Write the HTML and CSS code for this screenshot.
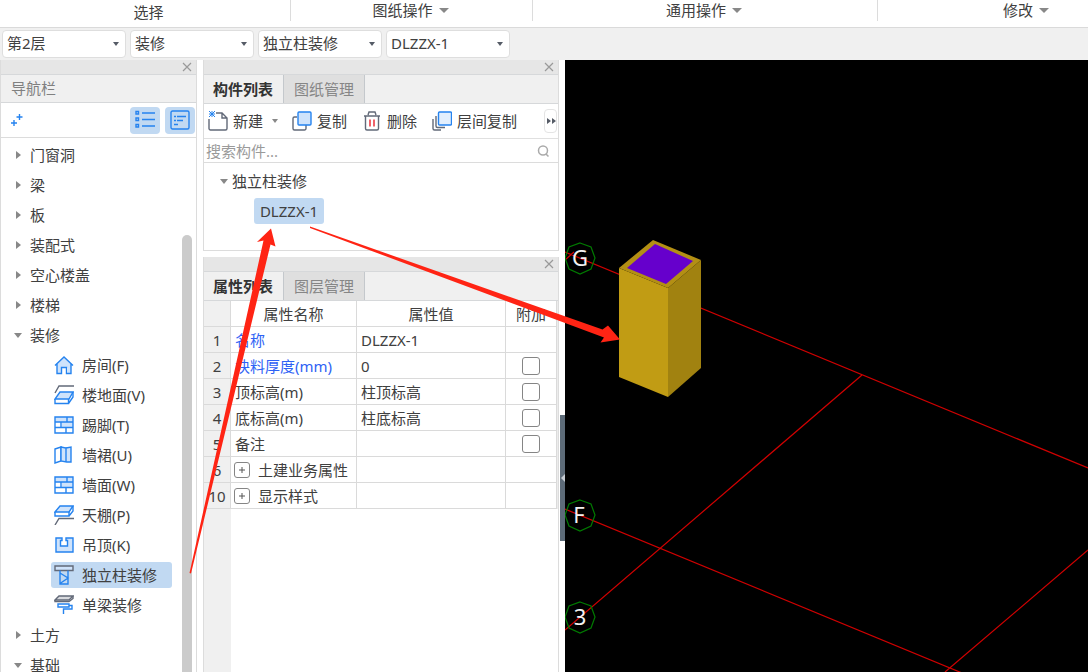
FILE: index.html
```html
<!DOCTYPE html>
<html lang="zh-CN">
<head>
<meta charset="utf-8">
<meta name="viewport" content="width=device-width, initial-scale=1">
<title>构件装修</title>
<link rel="stylesheet" href="styles.css">
</head>
<body>
<div class="app">
  <header class="ribbon">
    <div class="ribbon-group group-select"><span>选择</span></div>
    <div class="ribbon-group group-drawing"><button class="ribbon-button">图纸操作<i class="caret"></i></button></div>
    <div class="ribbon-group group-common"><button class="ribbon-button">通用操作<i class="caret"></i></button></div>
    <div class="ribbon-group group-modify"><button class="ribbon-button">修改<i class="caret"></i></button></div>
  </header>

  <div class="selectors">
    <div class="combo"><select aria-label="楼层"><option>第2层</option></select></div>
    <div class="combo"><select aria-label="分类"><option>装修</option></select></div>
    <div class="combo"><select aria-label="构件类型"><option>独立柱装修</option></select></div>
    <div class="combo"><select aria-label="构件"><option>DLZZX-1</option></select></div>
  </div>

  <main class="workspace">
    <nav class="navigator" aria-label="导航栏">
      <div class="strip"><button class="close" aria-label="关闭"><svg width="10" height="10" viewBox="0 0 10 10"><path d="M1 1l8 8M9 1l-8 8"/></svg></button></div>
      <h2 class="nav-title">导航栏</h2>
      <div class="nav-tools">
        <button class="plain" aria-label="添加"><svg class="icon" width="14" height="14" viewBox="0 0 14 14"><path class="blue" d="M9.500 1v6M6.500 4h6M4 7v6M1 10h6"/></svg></button>
        <button class="view" aria-label="列表视图"><svg class="icon" width="20" height="20" viewBox="0 0 20 20"><path class="blue" d="M1 1.500h2.500v2.500H1zM1 8h2.500v2.500H1zM1 14.500h2.500V17H1zM7 3h13M7 9.500h13M7 16h13"/></svg></button>
        <button class="view" aria-label="详细视图"><svg class="icon" width="20" height="20" viewBox="0 0 20 20"><rect class="blue" x="1" y="1" width="18" height="18" rx="1.500"/><path class="blue" d="M4 6.500h2M7 6.500h9M4 10.500h2M7 10.500h6M4 14.500h4"/></svg></button>
      </div>
      <div class="nav-body">
        <ul class="nav-tree">
          <li><button class="branch"><i class="arrow"></i>门窗洞</button></li>
          <li><button class="branch"><i class="arrow"></i>梁</button></li>
          <li><button class="branch"><i class="arrow"></i>板</button></li>
          <li><button class="branch"><i class="arrow"></i>装配式</button></li>
          <li><button class="branch"><i class="arrow"></i>空心楼盖</button></li>
          <li><button class="branch"><i class="arrow"></i>楼梯</button></li>
          <li><button class="branch"><i class="arrow open"></i>装修</button>
            <ul class="leaves">
              <li><button class="leaf"><svg class="icon" width="20" height="20" viewBox="0 0 20 20"><path class="fill" d="M10 2l7 7v9.500h-3v-6H7v6H3V9z"/><path class="blue" d="M1 10.500l9-8.500 9 8.500M3 9v9.500h4.500v-6h5v6H17V9"/></svg>房间(F)</button></li>
              <li><button class="leaf"><svg class="icon" width="20" height="20" viewBox="0 0 20 20"><path class="slate" d="M1 8l4-7h15"/><path class="blue fill" d="M6 7h13l-4 7H1z"/><path class="blue" d="M1 14v4.500h13.500V14M14.500 18.500L19 12V7"/></svg>楼地面(V)</button></li>
              <li><button class="leaf"><svg class="icon" width="20" height="20" viewBox="0 0 20 20"><path class="fill" d="M1 2h18v5H1zM8 7h11v5H8z"/><path class="blue" d="M1 2h18v16H1zM1 7h18M1 12.500h18M13 2v5M7 7v5.500M12 12.500V18"/></svg>踢脚(T)</button></li>
              <li><button class="leaf"><svg class="icon" width="20" height="20" viewBox="0 0 20 20"><path class="blue" d="M1 4l6-2v14l-6 2z"/><path class="blue fill" d="M7 2l5 1v14l-5-1zM12 3l5-1v15h-5z"/></svg>墙裙(U)</button></li>
              <li><button class="leaf"><svg class="icon" width="20" height="20" viewBox="0 0 20 20"><path class="fill" d="M1 2h18v5H1zM8 7h11v5H8z"/><path class="blue" d="M1 2h18v16H1zM1 7h18M1 12.500h18M13 2v5M7 7v5.500M12 12.500V18"/></svg>墙面(W)</button></li>
              <li><button class="leaf"><svg class="icon" width="20" height="20" viewBox="0 0 20 20"><path class="blue fill" d="M6 1h13l-4 6H1z"/><path class="blue" d="M1 7v4h14V7M15 11l4-5V1"/><path class="slate" d="M1 20l4-6.500h15"/></svg>天棚(P)</button></li>
              <li><button class="leaf"><svg class="icon" width="20" height="20" viewBox="0 0 20 20"><path class="blue fill" d="M2 3h6v2.500H6.500V11h7V5.500H12V3h7v14H2z"/></svg>吊顶(K)</button></li>
              <li><button class="leaf selected"><svg class="icon" width="20" height="20" viewBox="0 0 20 20"><path class="slate fill" d="M1 1h18v4.500H1z"/><path class="blue" d="M6 5.500V19h8V5.500M6 8l8 5-8 5.500M14 8v11"/></svg>独立柱装修</button></li>
              <li><button class="leaf"><svg class="icon" width="20" height="20" viewBox="0 0 20 20"><path class="slate grayfill" d="M5 1h14l-4 4H1z"/><path class="slate" d="M1 5v1.500h14l4-3V1"/><path class="blue" d="M4 9h11v3H4zM15 10.500h3v3.500H9.500v5"/></svg>单梁装修</button></li>
            </ul>
          </li>
          <li><button class="branch"><i class="arrow"></i>土方</button></li>
          <li><button class="branch"><i class="arrow open"></i>基础</button></li>
        </ul>
        <div class="scroll-track"><div class="scroll-thumb"></div></div>
      </div>
    </nav>

    <div class="middle">
      <section class="panel components">
        <div class="strip"><button class="close" aria-label="关闭"><svg width="10" height="10" viewBox="0 0 10 10"><path d="M1 1l8 8M9 1l-8 8"/></svg></button></div>
        <div class="tabs"><button class="tab active">构件列表</button><button class="tab">图纸管理</button></div>
        <div class="tools">
          <button class="tool"><svg class="icon" width="20" height="20" viewBox="0 0 20 20"><path class="slate" d="M8 2h6l5 5v10.500a1.500 1.500 0 0 1-1.500 1.500h-15A1.500 1.500 0 0 1 1 17.500V8M14 2v5h5"/><path class="blue thin" d="M1 0l6 6M7 0L1 6M4 0v6M1 3h6"/></svg>新建<i class="caret small"></i></button>
          <button class="tool tool-copy"><svg class="icon" width="20" height="20" viewBox="0 0 20 20"><path class="slate" d="M5 6H2.500A1.500 1.500 0 0 0 1 7.500v10A1.500 1.500 0 0 0 2.500 19h10a1.500 1.500 0 0 0 1.500-1.500V14"/><rect class="blue fill" x="6" y="1" width="13" height="13" rx="1"/></svg>复制</button>
          <button class="tool tool-delete"><svg class="icon" width="20" height="20" viewBox="0 0 20 20"><path class="slate" d="M2 5h16M6 4l1-3h6l1 3M3.500 5v12.500A1.500 1.500 0 0 0 5 19h10a1.500 1.500 0 0 0 1.500-1.500V5"/><path class="red" d="M8 8.500v7M12 8.500v7"/></svg>删除</button>
          <button class="tool tool-floor"><svg class="icon" width="20" height="20" viewBox="0 0 20 20"><path class="slate" d="M1 8v9.500A1.500 1.500 0 0 0 2.500 19H9M4 5v10a1.500 1.500 0 0 0 1.500 1.500H13"/><rect class="blue palefill" x="6.500" y="1" width="13" height="13" rx="1"/></svg>层间复制</button>
          <button class="more" aria-label="更多"><svg width="10" height="8" viewBox="0 0 10 8"><path d="M1 1l4 3-4 3zM6 1l4 3-4 3z"/></svg></button>
        </div>
        <div class="search">
          <input type="search" aria-label="搜索构件" placeholder="搜索构件...">
          <svg width="14" height="14" viewBox="0 0 14 14"><circle cx="7" cy="6.500" r="4.500"/><path d="M10 10l2.500 2.500"/></svg>
        </div>
        <div class="component-tree">
          <button class="component-group"><i class="arrow open"></i>独立柱装修</button>
          <button class="component selected">DLZZX-1</button>
        </div>
      </section>

      <section class="panel properties">
        <div class="strip"><button class="close" aria-label="关闭"><svg width="10" height="10" viewBox="0 0 10 10"><path d="M1 1l8 8M9 1l-8 8"/></svg></button></div>
        <div class="tabs"><button class="tab active">属性列表</button><button class="tab">图层管理</button></div>
        <div class="property-body">
          <table class="property-table">
            <colgroup><col class="col-index"><col class="col-name"><col><col class="col-extra"></colgroup>
            <thead><tr><th></th><th>属性名称</th><th>属性值</th><th>附加</th></tr></thead>
            <tbody>
              <tr><th>1</th><td class="key">名称</td><td>DLZZX-1</td><td></td></tr>
              <tr><th>2</th><td class="key">块料厚度(mm)</td><td>0</td><td class="check"><input type="checkbox" aria-label="附加 块料厚度"></td></tr>
              <tr><th>3</th><td>顶标高(m)</td><td>柱顶标高</td><td class="check"><input type="checkbox" aria-label="附加 顶标高"></td></tr>
              <tr><th>4</th><td>底标高(m)</td><td>柱底标高</td><td class="check"><input type="checkbox" aria-label="附加 底标高"></td></tr>
              <tr><th>5</th><td>备注</td><td></td><td class="check"><input type="checkbox" aria-label="附加 备注"></td></tr>
              <tr><th>6</th><td><div class="expandable"><button class="expand" aria-label="展开土建业务属性"><svg width="8" height="8" viewBox="0 0 8 8"><path d="M4 1v6M1 4h6"/></svg></button>土建业务属性</div></td><td></td><td></td></tr>
              <tr><th>10</th><td><div class="expandable"><button class="expand" aria-label="展开显示样式"><svg width="8" height="8" viewBox="0 0 8 8"><path d="M4 1v6M1 4h6"/></svg></button>显示样式</div></td><td></td><td></td></tr>
            </tbody>
          </table>
          <div class="table-rest"></div>
        </div>
      </section>
    </div>

    <div class="splitter"><button class="collapse" aria-label="折叠面板"></button></div>

    <section class="viewport" aria-label="三维视图">
      <svg class="scene">
        <g class="axis-lines">
          <path d="M0 192L523 408M0 449L523 665M0 570L297 315M380 612L523 490M0 200l9-8"/>
        </g>
        <g class="axis-bubbles">
          <path d="M15 183l11 4 4 11-4 11-11 5-11-5-4-11 4-11z"/>
          <path d="M15 440l11 4 4 11-4 11-11 5-11-5-4-11 4-11z"/>
          <path d="M15 542l11 4 4 11-4 11-11 5-11-5-4-11 4-11z"/>
        </g>
        <g class="axis-labels">
          <text x="15" y="206">G</text>
          <text x="14" y="463">F</text>
          <text x="15" y="565">3</text>
        </g>
        <path class="face-left" d="M54 208l49 20v109l-49-20z"/>
        <path class="face-right" d="M103 228l33-28v108l-33 29z"/>
        <path class="face-top" d="M54 208l34-28 48 20-33 28z"/>
        <path class="face-core" d="M62 208l28-24 38 17-27 23z"/>
      </svg>
    </section>
  </main>

  <svg class="annotations" aria-hidden="true">
    <path d="M189.500 573L263.500 240.500L257 242L271 228.500L275.500 246.500L270.500 244.500L191 573.500z"/>
    <path d="M310 226.500L602.500 329.500L608 325.500L620 339.500L600.500 342.500L604 337.500L310 228z"/>
  </svg>
</div>
</body>
</html>
```
FILE: styles.css
```css
* { box-sizing: border-box; }

body {
  margin: 0;
  background: #fff;
  color: #404040;
  font: 15px/20px "Noto Sans", "Noto Sans CJK SC", sans-serif;
}

button, select, input { font: inherit; color: inherit; margin: 0; }

button {
  display: flex;
  align-items: center;
  border: 0;
  padding: 0;
  background: none;
  white-space: nowrap;
}

ul { list-style: none; margin: 0; padding: 0; }
svg { display: block; flex: none; }

.app {
  position: relative;
  display: flex;
  flex-direction: column;
  height: 100vh;
  overflow: hidden;
}

.caret {
  border: 5px solid transparent;
  border-top-color: #888;
  border-bottom: 0;
}
.caret.small { border-width: 4px 3px 0; }

/* Ribbon */
.ribbon { display: flex; flex: none; height: 27px; }
.ribbon-group {
  display: flex;
  justify-content: center;
  height: 21px;
  border-right: 1px solid #dcdcdc;
}
.ribbon-button { height: 20px; gap: 6px; }
.group-select { width: 291px; padding: 2px 0 0 7px; }
.group-drawing { width: 242px; padding-right: 2px; }
.group-common { width: 345px; padding-right: 2px; }
.group-modify { flex: 1; justify-content: flex-end; padding-right: 39px; border: 0; }

/* Selector bar */
.selectors {
  display: flex;
  flex: none;
  gap: 4px;
  height: 33px;
  padding: 2px;
  background: #f0f0f0;
  border-top: 1px solid #dadada;
}
.combo { position: relative; width: 124px; height: 28px; }
.combo::after {
  content: "";
  position: absolute;
  right: 7px;
  top: 12px;
  border: 3px solid transparent;
  border-top: 4px solid #555b66;
  border-bottom: 0;
  pointer-events: none;
}
.combo select {
  appearance: none;
  width: 100%;
  height: 100%;
  padding: 0 18px 2px 4px;
  background: #fff;
  border: 1px solid #dedede;
  border-radius: 4px;
}

/* Panels */
.workspace { display: flex; flex: 1; min-height: 0; }
.strip {
  display: flex;
  flex: none;
  justify-content: flex-end;
  align-items: center;
  height: 15px;
  padding-right: 4px;
  background: #e6e6e6;
  border-bottom: 1px solid #d6d8da;
}
.close path { stroke: #999; stroke-width: 1.2; }

.navigator {
  display: flex;
  flex: none;
  flex-direction: column;
  width: 197px;
  border: 1px solid #dcdcdc;
  border-width: 0 1px;
}
.nav-title {
  flex: none;
  margin: 0;
  padding: 3px 10px 4px;
  background: #f0f0f0;
  border-bottom: 1px solid #d6d8da;
  color: #808080;
  font-size: 15px;
  font-weight: 400;
}
.nav-tools {
  display: flex;
  flex: none;
  align-items: center;
  gap: 5px;
  height: 35px;
  padding: 0 1px 0 9px;
  border-bottom: 1px solid #dcdcdc;
}
.plain { margin-right: auto; }
.view {
  justify-content: center;
  width: 30px;
  height: 27px;
  border-radius: 4px;
  background: #c1d9f2;
}
.nav-body { display: flex; flex: 1; min-height: 0; overflow: hidden; }
.nav-tree { flex: 1; padding-top: 2px; }
.branch { height: 30px; padding-left: 12px; gap: 7px; }
.arrow { display: flex; width: 10px; justify-content: center; }
.arrow::before {
  content: "";
  border: 4px solid transparent;
  border-left: 5px solid #888;
  border-right: 0;
}
.arrow.open::before {
  border: 4px solid transparent;
  border-top: 5px solid #888;
  border-bottom: 0;
}
.leaves { padding-left: 50px; }
.leaves li { display: flex; align-items: center; height: 30px; }
.leaf { gap: 8px; height: 26px; padding: 0 15px 0 3px; border-radius: 3px; }
.selected { background: #c1d9f2; }
.scroll-track { flex: none; width: 14px; padding-top: 97px; }
.scroll-thumb { width: 10px; height: 100%; border-radius: 5px 5px 0 0; background: #cbcbcb; }

/* Line icons */
.icon path, .icon rect { fill: none; stroke-width: 1.4; }
.icon .blue { stroke: #2583ef; }
.icon .slate { stroke: #626978; }
.icon .red { stroke: #ed3b45; stroke-width: 1.6; }
.icon .thin { stroke-width: 1; }
.icon .fill { fill: #cfe3fb; }
.icon .palefill { fill: #e3effd; }
.icon .grayfill { fill: #d8dade; }

.middle {
  display: flex;
  flex: none;
  flex-direction: column;
  gap: 6px;
  width: 356px;
  margin-left: 6px;
}
.panel {
  display: flex;
  flex-direction: column;
  border: 1px solid #dcdcdc;
  border-width: 0 1px;
}
.components { flex: none; border-bottom-width: 1px; }
.properties { flex: 1; min-height: 0; }
.tabs {
  display: flex;
  flex: none;
  height: 29px;
  background: #f0f0f0;
  border-bottom: 1px solid #d6d8da;
}
.tab {
  padding: 0 10px;
  border-right: 1px solid #c4c8cc;
  background: #dfdfdf;
  color: #868686;
}
.tab.active { padding-left: 9px; background: #f0f0f0; color: #333; font-weight: 700; }

.tools {
  display: flex;
  align-items: center;
  height: 35px;
  padding: 0 1px 0 4px;
  border-bottom: 1px solid #e0e0e0;
}
.tool { gap: 5px; }
.tool .caret { margin-left: 4px; }
.tool-copy { margin-left: 14px; }
.tool-delete { margin-left: 15px; }
.tool-floor { margin-left: 15px; }
.more {
  justify-content: center;
  width: 13px;
  height: 24px;
  margin-left: auto;
  border: 1px solid #e4e4e4;
  border-radius: 4px;
}
.more path { fill: #555b66; }

.search {
  display: flex;
  align-items: center;
  height: 24px;
  padding-right: 8px;
  border-bottom: 1px solid #dcdcdc;
}
.search input {
  appearance: none;
  flex: 1;
  min-width: 0;
  height: 22px;
  padding: 0 2px;
  border: 0;
  outline: 0;
  background: none;
}
.search input::placeholder { color: #9a9a9a; opacity: 1; }
.search svg { fill: none; stroke: #aaa; stroke-width: 1.5; }

.component-tree { height: 87px; padding: 3px 0 0 15px; }
.component-group { height: 30px; gap: 3px; }
.component {
  justify-content: center;
  width: 70px;
  height: 26px;
  margin: 2px 0 0 35px;
  border-radius: 3px;
}

/* Property grid */
.property-body { display: flex; flex: 1; flex-direction: column; min-height: 0; }
.property-table {
  width: 100%;
  table-layout: fixed;
  border-spacing: 0;
  border-right: 1px solid #ececec;
}
.col-index { width: 27px; }
.col-name { width: 126px; }
.col-extra { width: 51px; }
.property-table th, .property-table td {
  height: 26px;
  padding: 0 4px;
  border: 1px solid #dadada;
  border-width: 0 1px 1px 0;
  text-align: left;
  font-weight: 400;
  white-space: nowrap;
}
.property-table th { padding: 0; text-align: center; }
.property-table tbody th, .property-table th:first-child { background: #f0f0f0; }
.property-table .key { color: #2e62f5; }
.property-table .check { padding: 0; text-align: center; }
.check input {
  appearance: none;
  display: block;
  width: 18px;
  height: 18px;
  margin: 0 auto;
  border: 1px solid #858585;
  border-radius: 3px;
  background: #fff;
}
.expandable { display: flex; align-items: center; gap: 8px; }
.expand {
  justify-content: center;
  width: 16px;
  height: 16px;
  margin-left: -1px;
  border: 1px solid #858585;
  border-radius: 3px;
}
.expand path { stroke: #555; }
.table-rest { flex: 1; width: 27px; background: #f0f0f0; }

/* Splitter and 3D view */
.splitter { display: flex; flex: none; align-items: center; width: 6px; padding: 0 0 0 1px; }
.collapse {
  justify-content: flex-end;
  width: 5px;
  height: 126px;
  margin-top: 224px;
  background: #5d6b78;
}
.collapse::before {
  content: "";
  border: 4px solid transparent;
  border-right: 4px solid #c6ccd2;
  border-left: 0;
}
.viewport { flex: 1; min-width: 0; background: #000; }
.scene { width: 100%; height: 100%; }
.axis-lines { fill: none; stroke: #d00000; stroke-width: 1.2; }
.axis-bubbles { fill: none; stroke: #007a00; stroke-width: 1.2; }
.axis-labels { fill: #f2f2f2; font-size: 22px; text-anchor: middle; }
.face-left { fill: #c19c14; }
.face-right { fill: #a18210; }
.face-top { fill: #b38f14; }
.face-core { fill: #6600cc; }

.annotations {
  position: absolute;
  inset: 0;
  width: 100%;
  height: 100%;
  fill: #ff2414;
  pointer-events: none;
}
```
